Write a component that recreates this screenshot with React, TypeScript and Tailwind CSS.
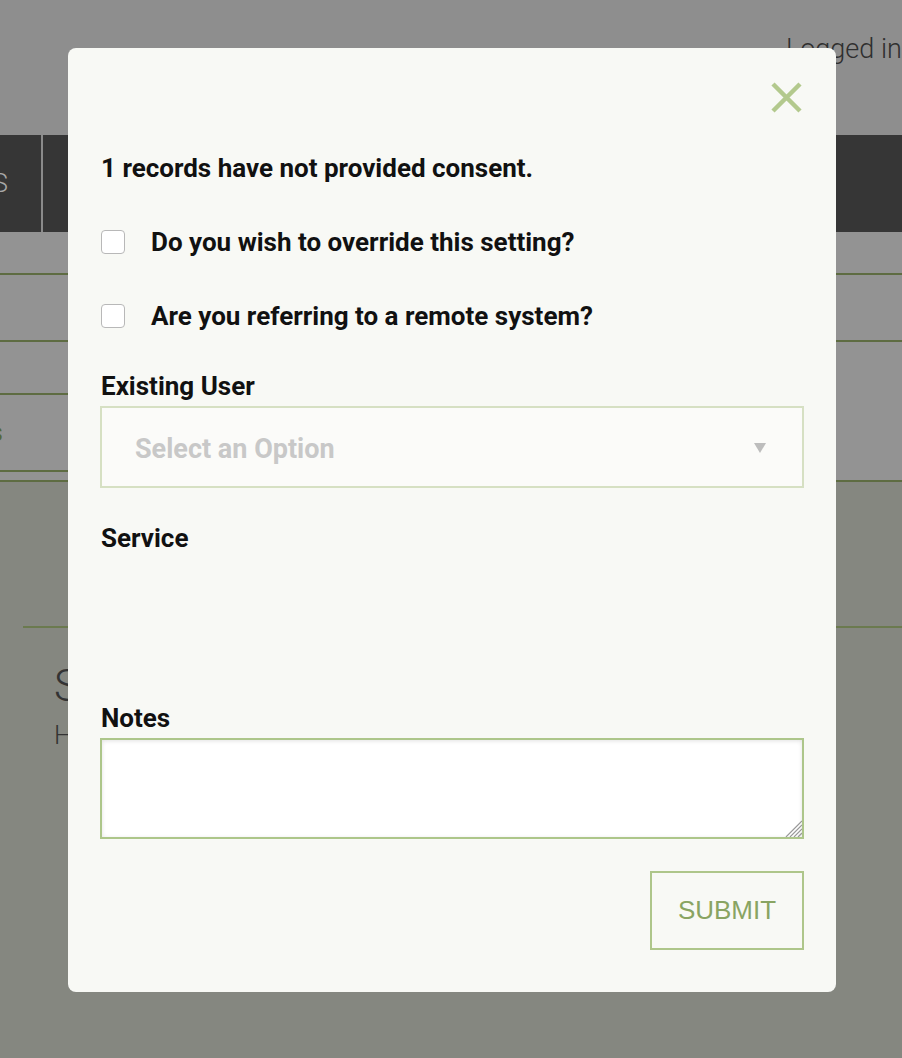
export default function App() {
  return (
    <div className="relative w-[902px] h-[1058px] overflow-hidden bg-[#858780] font-['Roboto',sans-serif]">
      {/* page behind the overlay */}
      <div className="h-[135px] bg-[#8e8e8e] pt-[33px] pl-[786px] whitespace-nowrap text-[27px] font-light leading-[32px] text-[#2f2f2f]">
        Logged in
      </div>
      <div className="h-[97px] bg-[#363636] flex">
        <div className="w-[43px] border-r-2 border-[#8b8b8b] overflow-hidden flex items-center justify-end pr-[33px] whitespace-nowrap text-[26px] font-light text-[#a8a8a8]">
          RECORDS
        </div>
      </div>
      <div className="bg-[#939393]">
        <div className="h-[41px]" />
        <div className="h-[67px] border-t-2 border-[#5e6c42]" />
        <div className="h-[140px] border-t-2 border-[#5e6c42]">
          <div className="w-[600px] h-[51px]" />
          <div className="w-[600px] h-[77px] border-t-2 border-[#5e6c42] flex items-center justify-end pr-[597px] overflow-hidden whitespace-nowrap text-[26px] text-[#56673a]">
            Reports
          </div>
          <div className="w-[600px] border-t-2 border-[#5e6c42]" />
        </div>
      </div>
      <div className="border-t-2 border-[#5e6c42]">
        <div className="h-[144px]" />
        <div className="ml-[23px] border-t-2 border-[#6b7a4f]" />
        <div className="pl-[54px] pt-[34px] text-[44px] font-light leading-[48px] text-[#333]">S</div>
        <div className="pl-[54px] pt-[6px] text-[26px] font-light text-[#333]">H</div>
      </div>

      {/* modal */}
      <div className="absolute left-[68px] top-[48px] w-[768px] h-[944px] rounded-[8px] bg-[#f8f9f5] flex flex-col px-[32px]">
        <div className="flex justify-end pt-[34px] pr-[2px]">
          <svg width="31" height="31" viewBox="0 0 31 31">
            <path d="M2 2 L29 29 M29 2 L2 29" stroke="#b3c98d" strokeWidth="4.5" />
          </svg>
        </div>
        <div className="mt-[40px] pl-[1px] text-[26px] leading-[30px] font-bold text-[#111]">
          1 records have not provided consent.
        </div>
        <label className="mt-[44px] pl-[1px] flex items-center gap-[26px] h-[30px]">
          <span className="w-[24px] h-[24px] rounded-[4px] border border-[#b8b8b8] bg-white" />
          <span className="text-[26px] leading-[30px] font-bold text-[#111]">Do you wish to override this setting?</span>
        </label>
        <label className="mt-[44px] pl-[1px] flex items-center gap-[26px] h-[30px]">
          <span className="w-[24px] h-[24px] rounded-[4px] border border-[#b8b8b8] bg-white" />
          <span className="text-[26px] leading-[30px] font-bold text-[#111]">Are you referring to a remote system?</span>
        </label>
        <div className="mt-[40px] pl-[1px] text-[26px] leading-[30px] font-bold text-[#111]">Existing User</div>
        <div className="mt-[5px] h-[82px] border-2 border-[#d6e0c3] bg-[#fbfbf9] flex items-center justify-between pl-[33px] pr-[36px]">
          <span className="pt-[5px] text-[27px] font-bold text-[#c8c8c8]">Select an Option</span>
          <svg width="12" height="10" viewBox="0 0 12 10" className="mt-[2px]">
            <path d="M0 0 H12 L6 10 Z" fill="#bdbdbd" />
          </svg>
        </div>
        <div className="mt-[35px] pl-[1px] text-[26px] leading-[30px] font-bold text-[#111]">Service</div>
        <div className="mt-[150px] pl-[1px] text-[26px] leading-[30px] font-bold text-[#111]">Notes</div>
        <div className="relative mt-[5px] h-[101px]">
          <textarea className="block w-full h-full border-2 border-[#adc68a] bg-white shadow-[inset_0_1px_4px_rgba(0,0,0,0.12)] outline-none resize-none" />
          <svg width="20" height="20" viewBox="0 0 20 20" className="absolute right-[2px] bottom-[2px]">
            <path d="M4 20 L20 4 M8 20 L20 8 M12 20 L20 12 M16 20 L20 16" stroke="#9a9a9a" strokeWidth="1.3" />
            <path d="M5 20 L20 5 M9 20 L20 9 M13 20 L20 13" stroke="#e0e0e0" strokeWidth="1" />
          </svg>
        </div>
        <div className="mt-[32px] flex justify-end">
          <button className="w-[154px] h-[79px] border-2 border-[#aec68a] text-[26px] font-['Liberation_Sans',Arial,sans-serif] text-[#89a462]">
            SUBMIT
          </button>
        </div>
      </div>
    </div>
  );
}
